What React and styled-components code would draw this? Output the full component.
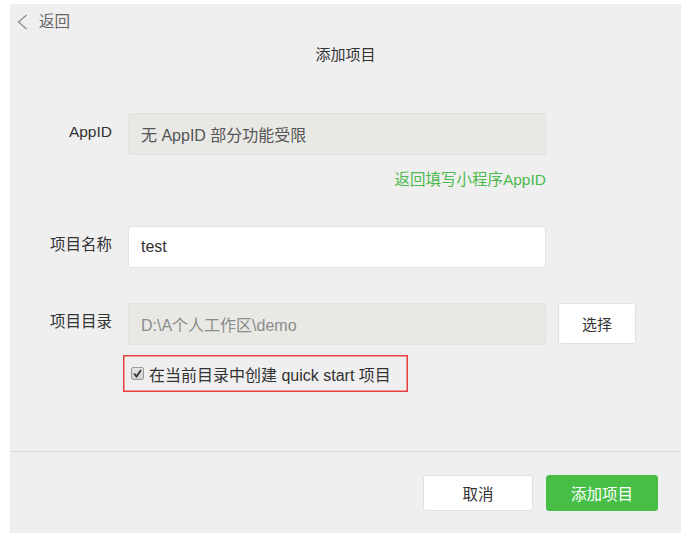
import React, { useState } from "react";
import styled, { createGlobalStyle } from "styled-components";

const GlobalStyle = createGlobalStyle`
  body {
    margin: 0;
    background: #ffffff;
    font-family: "Liberation Sans", "Noto Sans CJK SC", sans-serif;
  }
`;

const App = () => {
  const [name, setName] = useState("test");
  const [quickStart, setQuickStart] = useState(true);

  return (
    <>
      <GlobalStyle />
      <StPanel>
        <StTopBar>
          <svg width="11" height="16" viewBox="0 0 11 16">
            <polyline
              points="9.5,1 1.5,8 9.5,15"
              fill="none"
              stroke="#8a8a8a"
              strokeWidth="1.2"
            />
          </svg>
          <StBack>返回</StBack>
        </StTopBar>
        <StTitle>添加项目</StTitle>

        <StForm>
          <StRow $top={48}>
            <StLabel>AppID</StLabel>
            <StField $disabled>无 AppID 部分功能受限</StField>
          </StRow>
          <StHint>返回填写小程序AppID</StHint>

          <StRow $top={36}>
            <StLabel>项目名称</StLabel>
            <StInput value={name} onChange={(e) => setName(e.target.value)} />
          </StRow>

          <StRow $top={35}>
            <StLabel>项目目录</StLabel>
            <StField $disabled $muted>
              D:\A个人工作区\demo
            </StField>
            <StPick>选择</StPick>
          </StRow>

          <StHighlight onClick={() => setQuickStart(!quickStart)}>
            <StCheck>
              {quickStart && (
                <svg width="11" height="11" viewBox="0 0 11 11">
                  <polyline
                    points="2,5.5 4.5,8.5 9,2"
                    fill="none"
                    stroke="#333"
                    strokeWidth="1.8"
                  />
                </svg>
              )}
            </StCheck>
            在当前目录中创建 quick start 项目
          </StHighlight>
        </StForm>

        <StFooter>
          <StButton>取消</StButton>
          <StButton $primary>添加项目</StButton>
        </StFooter>
      </StPanel>
    </>
  );
};

export default App;

const StPanel = styled.div`
  margin: 4px 0 0 10px;
  width: 671px;
  height: 529px;
  background-color: #efefef;
  display: flex;
  flex-direction: column;
`;

const StTopBar = styled.div`
  display: flex;
  align-items: center;
  gap: 11px;
  padding: 8px 0 0 7px;
  height: 20px;
`;

const StBack = styled.span`
  font-size: 15.5px;
  line-height: 20px;
  color: #666;
`;

const StTitle = styled.div`
  margin-top: 13px;
  text-align: center;
  font-size: 15px;
  line-height: 20px;
  color: #333;
`;

const StForm = styled.div`
  flex: 1;
  padding-left: 38px;
`;

const StRow = styled.div`
  display: flex;
  align-items: flex-start;
  gap: 16px;
  margin-top: ${(props) => props.$top}px;
  height: 42px;
`;

const StLabel = styled.div`
  width: 64px;
  padding-top: 9px;
  text-align: right;
  font-size: 15.5px;
  line-height: 20px;
  color: #333;
  white-space: nowrap;
`;

const StField = styled.div`
  box-sizing: border-box;
  width: 418px;
  height: 42px;
  padding: 0 12px;
  display: flex;
  align-items: center;
  border: 1px solid #e2e2de;
  border-radius: 3px;
  background-color: ${(props) => (props.$disabled ? "#e8e8e4" : "#fff")};
  color: ${(props) => (props.$muted ? "#8c8c8c" : "#555")};
  font-size: 16px;
  white-space: nowrap;
`;

const StInput = styled.input`
  box-sizing: border-box;
  width: 418px;
  height: 42px;
  padding: 0 12px;
  border: 1px solid #e2e2e2;
  border-radius: 3px;
  background-color: #fff;
  color: #333;
  font-family: inherit;
  font-size: 16px;

  &:focus {
    outline: none;
  }
`;

const StPick = styled.button`
  box-sizing: border-box;
  width: 78px;
  height: 41px;
  margin-left: -4px;
  border: 1px solid #e0e0e0;
  border-radius: 3px;
  background-color: #fff;
  color: #333;
  font-family: inherit;
  font-size: 15px;
  cursor: pointer;
`;

const StHint = styled.div`
  width: 418px;
  margin: 15px 0 0 80px;
  text-align: right;
  font-size: 15.5px;
  line-height: 20px;
  color: #4cb94c;
`;

const StHighlight = styled.div`
  box-sizing: border-box;
  width: 285px;
  height: 37px;
  margin: 10px 0 0 75px;
  padding-left: 7px;
  display: flex;
  align-items: center;
  gap: 5px;
  border: 1px solid #e8413c;
  box-shadow: inset 0 0 0 0.5px #e8413c;
  font-size: 16px;
  color: #333;
  white-space: nowrap;
  cursor: pointer;
`;

const StCheck = styled.span`
  box-sizing: border-box;
  width: 13px;
  height: 13px;
  display: flex;
  align-items: center;
  justify-content: center;
  border: 1px solid #9a9a9a;
  border-radius: 2px;
  background: linear-gradient(#e6e6e6, #cfcfcf);
`;

const StFooter = styled.div`
  height: 82px;
  box-sizing: border-box;
  border-top: 1px solid #dcdcdc;
  padding: 23px 23px 0 0;
  display: flex;
  justify-content: flex-end;
  align-items: flex-start;
  gap: 13px;
`;

const StButton = styled.button`
  box-sizing: border-box;
  width: ${(props) => (props.$primary ? "112px" : "110px")};
  height: 36px;
  border: 1px solid ${(props) => (props.$primary ? "#45bd45" : "#e0e0e0")};
  border-radius: 3px;
  background-color: ${(props) => (props.$primary ? "#47bf47" : "#fff")};
  color: ${(props) => (props.$primary ? "#fff" : "#333")};
  font-family: inherit;
  font-size: 15.5px;
  cursor: pointer;
`;
